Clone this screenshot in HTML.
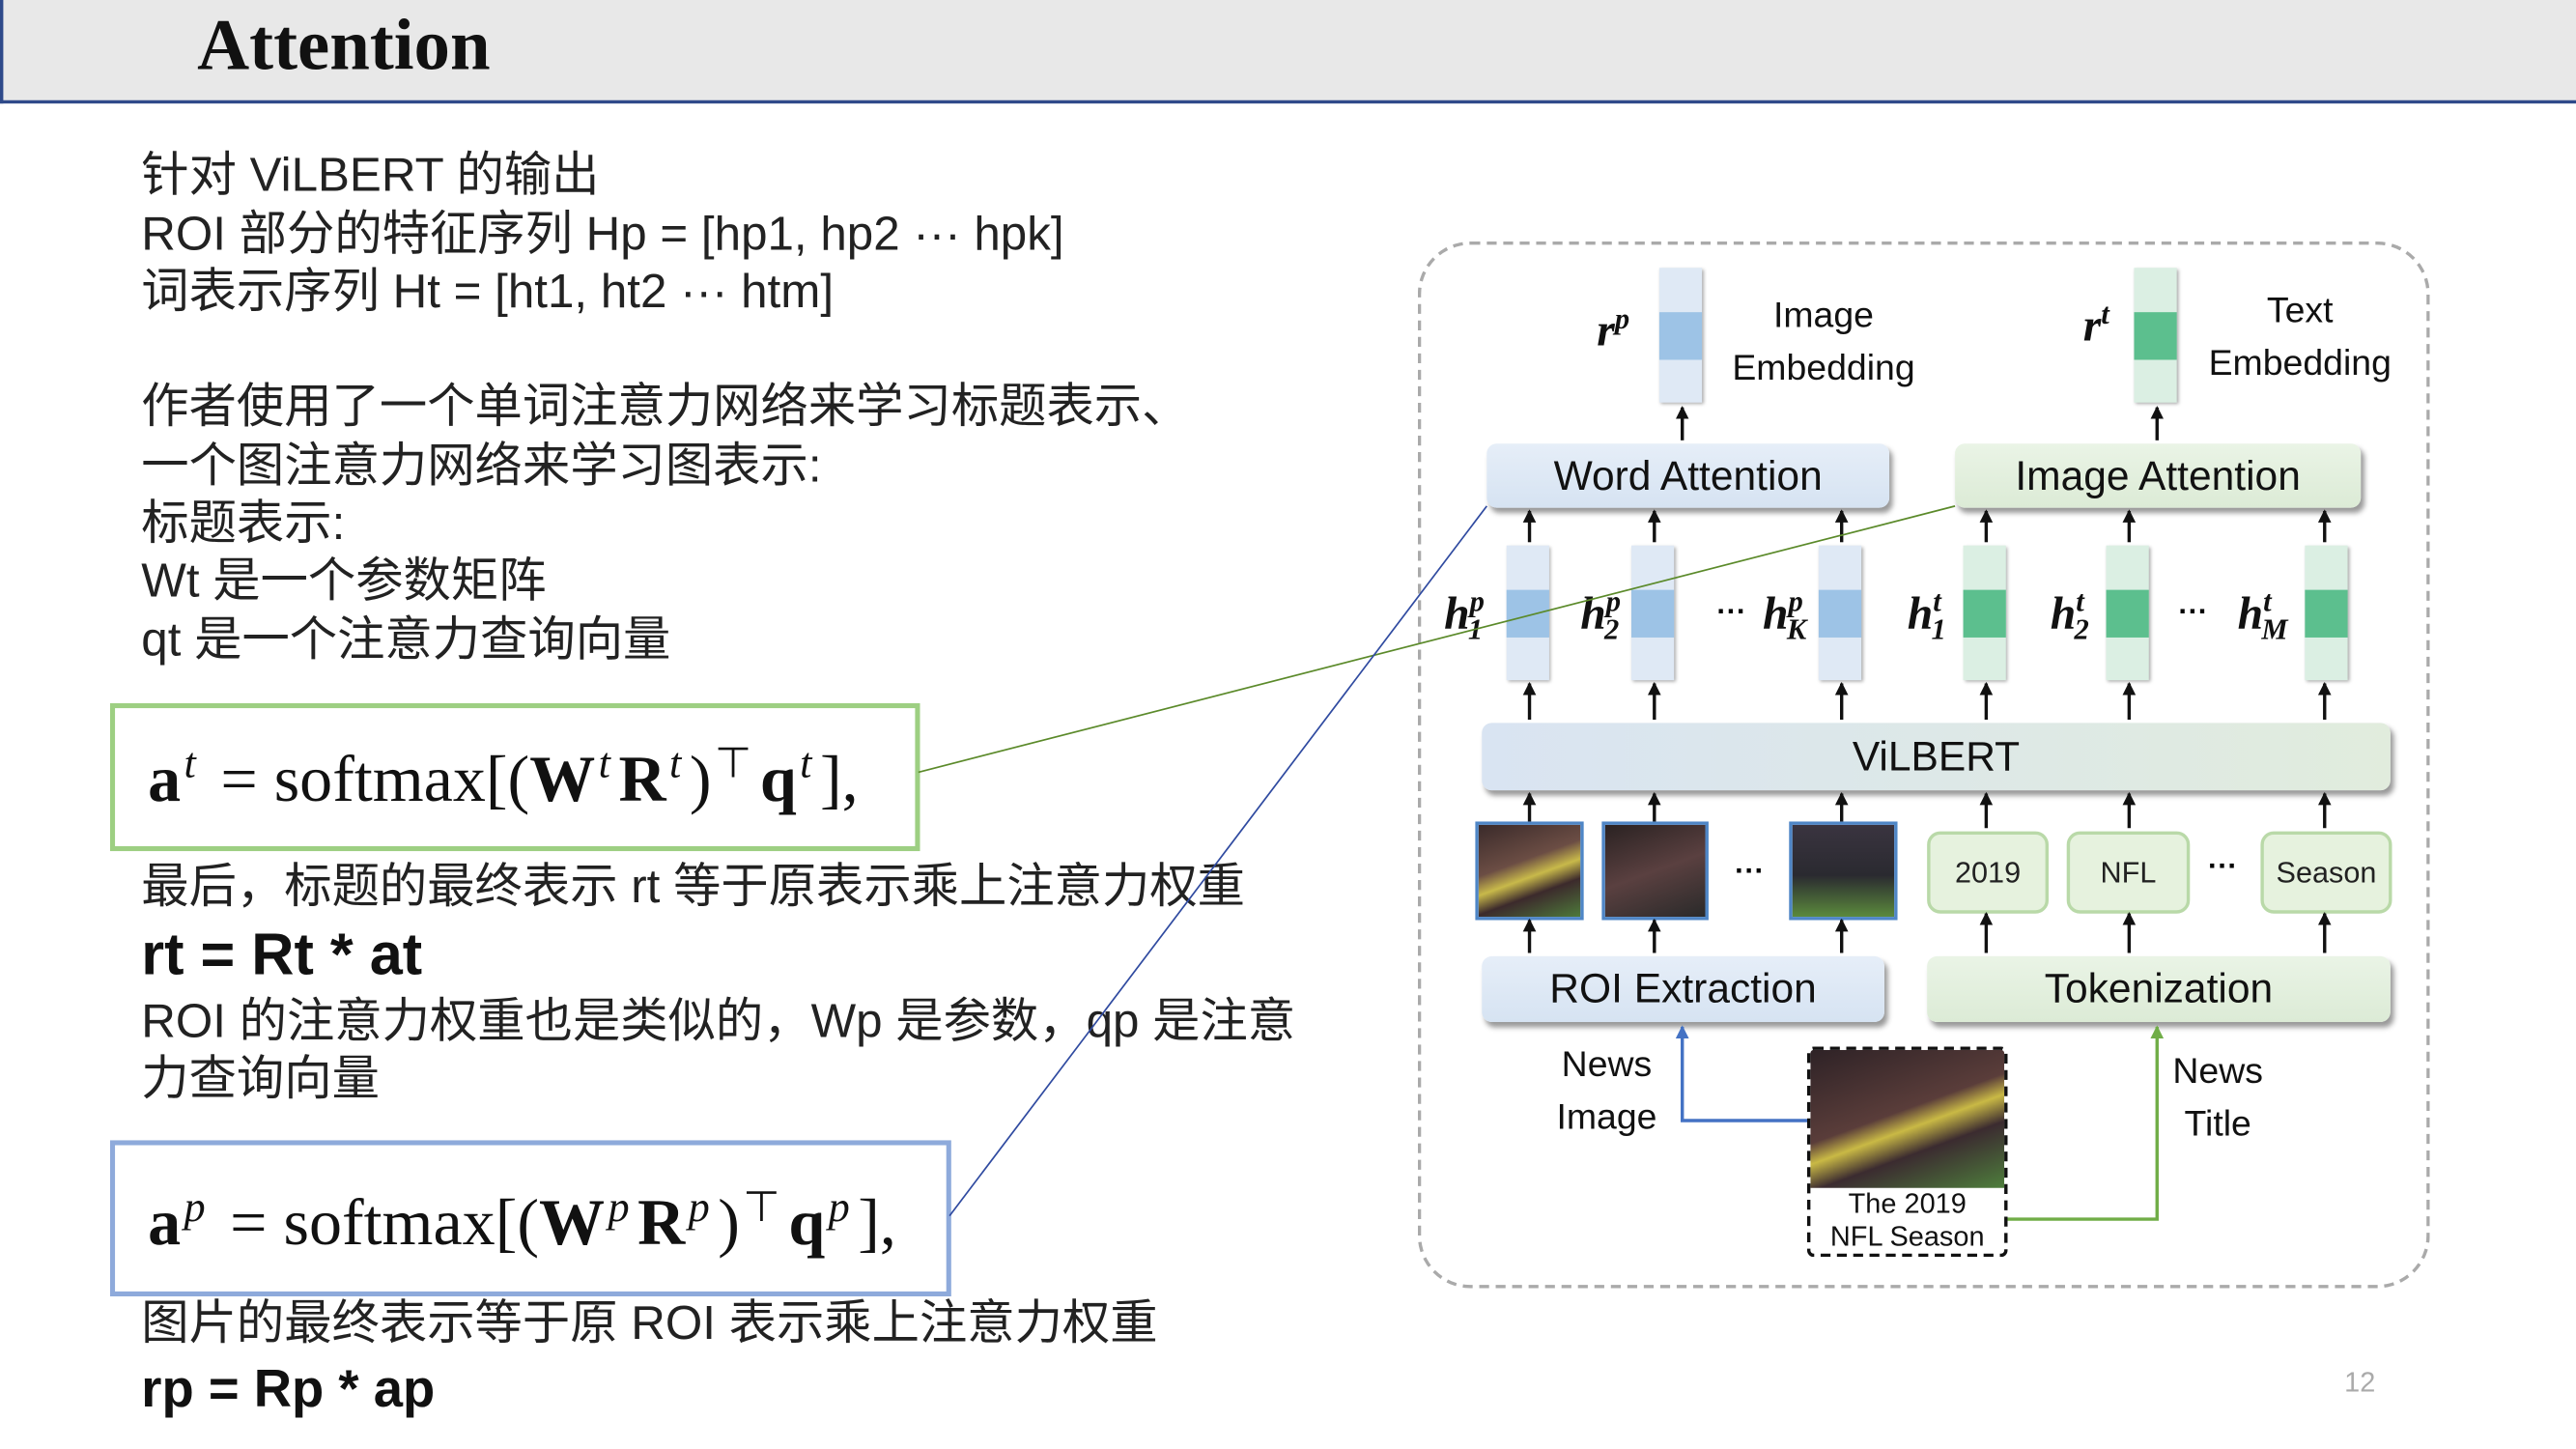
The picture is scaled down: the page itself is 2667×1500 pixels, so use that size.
<!DOCTYPE html>
<html><head><meta charset="utf-8"><style>
html,body{margin:0;padding:0;background:#fff;overflow:hidden}
#w{width:1568px;height:882px;position:relative;transform:scale(1.70089);transform-origin:0 0;font-family:"Liberation Sans","Noto Sans CJK SC",sans-serif}
.a{position:absolute}
.hdr{left:0;top:0;width:1566px;height:61px;background:#e8e8e8;border-left:2px solid #2f4a8a;border-bottom:2px solid #2f4a8a}
.title{left:120px;top:2px;font:bold 44px "Liberation Serif",serif;color:#111}
.t{left:86px;font-size:29px;color:#222;white-space:nowrap;line-height:36px}
.b{font-weight:bold;font-size:36px;color:#111}
.box{border:3px solid;background:#fff}
.f{font-family:"Liberation Serif",serif;font-size:40px;color:#111;white-space:nowrap}
.f sup{font-size:26px;padding:0 5px 0 2px}
.lb{background:linear-gradient(#e6eef8,#d6e3f2);border-radius:6px;box-shadow:2px 3px 3px #999;text-align:center;font-size:25px;color:#111}
.lg{background:linear-gradient(#eaf4e6,#dcebd6);border-radius:6px;box-shadow:2px 3px 3px #999;text-align:center;font-size:25px;color:#111}
.bb{background:#dfe9f5;width:26px;height:82px;box-shadow:1px 1px 2px #aaa}
.bb i{position:absolute;left:0;top:27px;width:26px;height:29px;background:#9dc3e6}
.gb{background:#dbefe3;width:26px;height:82px;box-shadow:1px 1px 2px #aaa}
.gb i{position:absolute;left:0;top:27px;width:26px;height:29px;background:#5cbf8e}
.hl{font:italic bold 28px "Liberation Serif",serif;color:#111}
.hl sup,.hl sub{font-size:18px}
.tok{background:#e6f2de;border:2px solid #b9d9a8;border-radius:8px;text-align:center;font-size:18px;line-height:46px;color:#222}
.img{background:linear-gradient(160deg,#3a2a2a,#6b4d44 40%,#c8b94a 55%,#3c2a2c 70%,#4d7a3a);border:2px solid #4f86c6}
.lab{font-size:22px;color:#111;text-align:center;line-height:32px}
</style></head><body><div id="w">
<div class="a hdr"></div>
<div class="a title">Attention</div>
<div class="a t" style="top:89px">针对 ViLBERT 的输出</div>
<div class="a t" style="top:125px">ROI 部分的特征序列 Hp = [hp1, hp2 ··· hpk]</div>
<div class="a t" style="top:160px">词表示序列 Ht = [ht1, ht2 ··· htm]</div>
<div class="a t" style="top:230px">作者使用了一个单词注意力网络来学习标题表示、</div>
<div class="a t" style="top:266px">一个图注意力网络来学习图表示:</div>
<div class="a t" style="top:301px">标题表示:</div>
<div class="a t" style="top:336px">Wt 是一个参数矩阵</div>
<div class="a t" style="top:372px">qt 是一个注意力查询向量</div>
<div class="a box" style="left:67px;top:428px;width:487px;height:84px;border-color:#9dcf82"></div>
<div class="a f" style="left:90px;top:450px"><b>a</b><sup><i>t</i></sup> = softmax[(<b>W</b><sup><i>t</i></sup><b>R</b><sup><i>t</i></sup>)<sup>⊤</sup><b>q</b><sup><i>t</i></sup>],</div>
<div class="a t" style="top:522px">最后，标题的最终表示 rt 等于原表示乘上注意力权重</div>
<div class="a t b" style="top:563px">rt = Rt * at</div>
<div class="a t" style="top:604px">ROI 的注意力权重也是类似的，Wp 是参数，qp 是注意</div>
<div class="a t" style="top:639px">力查询向量</div>
<div class="a box" style="left:67px;top:694px;width:506px;height:89px;border-color:#8eaadb"></div>
<div class="a f" style="left:90px;top:720px"><b>a</b><sup><i>p</i></sup> = softmax[(<b>W</b><sup><i>p</i></sup><b>R</b><sup><i>p</i></sup>)<sup>⊤</sup><b>q</b><sup><i>p</i></sup>],</div>
<div class="a t" style="top:788px">图片的最终表示等于原 ROI 表示乘上注意力权重</div>
<div class="a t b" style="top:827px;font-size:32px">rp = Rp * ap</div>
<div class="a" style="left:1427px;top:832px;font-size:17px;color:#aaa">12</div>

<div class="a" style="left:863px;top:147px;width:612px;height:633px;border:2px dashed #aaa;border-radius:32px"></div>
<div class="a bb" style="left:1010px;top:163px"><i></i></div>
<div class="a gb" style="left:1299px;top:163px"><i></i></div>
<div class="a hl" style="left:972px;top:184px">r<sup>p</sup></div>
<div class="a hl" style="left:1268px;top:181px">r<sup>t</sup></div>
<div class="a lab" style="left:1042px;top:176px;width:136px">Image<br>Embedding</div>
<div class="a lab" style="left:1332px;top:173px;width:136px">Text<br>Embedding</div>
<div class="a lb" style="left:905px;top:270px;width:245px;height:39px;line-height:40px">Word Attention</div>
<div class="a lg" style="left:1190px;top:270px;width:247px;height:39px;line-height:40px">Image Attention</div>
<div class="a bb" style="left:917px;top:332px"><i></i></div>
<div class="a bb" style="left:993px;top:332px"><i></i></div>
<div class="a bb" style="left:1107px;top:332px"><i></i></div>
<div class="a gb" style="left:1195px;top:332px"><i></i></div>
<div class="a gb" style="left:1282px;top:332px"><i></i></div>
<div class="a gb" style="left:1403px;top:332px"><i></i></div>
<div class="a hl" style="left:879px;top:356px">h<sup>p</sup><sub style="margin-left:-10px">1</sub></div>
<div class="a hl" style="left:962px;top:356px">h<sup>p</sup><sub style="margin-left:-10px">2</sub></div>
<div class="a hl" style="left:1073px;top:356px">h<sup>p</sup><sub style="margin-left:-10px">K</sub></div>
<div class="a hl" style="left:1161px;top:356px">h<sup>t</sup><sub style="margin-left:-6px">1</sub></div>
<div class="a hl" style="left:1248px;top:356px">h<sup>t</sup><sub style="margin-left:-6px">2</sub></div>
<div class="a hl" style="left:1362px;top:356px">h<sup>t</sup><sub style="margin-left:-6px">M</sub></div>
<div class="a" style="left:1045px;top:362px;font-weight:bold;font-size:18px">···</div>
<div class="a" style="left:1326px;top:362px;font-weight:bold;font-size:18px">···</div>
<div class="a" style="left:1056px;top:520px;font-weight:bold;font-size:18px">···</div>
<div class="a" style="left:1344px;top:517px;font-weight:bold;font-size:18px">···</div>
<div class="a lb" style="left:902px;top:440px;width:553px;height:41px;line-height:42px;background:linear-gradient(90deg,#d9e4f2,#e1ecdd)">ViLBERT</div>
<div class="a img" style="left:898px;top:500px;width:62px;height:56px"></div>
<div class="a img" style="left:975px;top:500px;width:61px;height:56px;background:linear-gradient(160deg,#2a2222,#5a4040 50%,#2a2a2a)"></div>
<div class="a img" style="left:1089px;top:500px;width:62px;height:56px;background:linear-gradient(180deg,#3a3440,#2a2a30 55%,#5b8a3c)"></div>
<div class="a tok" style="left:1173px;top:506px;width:70px;height:46px">2019</div>
<div class="a tok" style="left:1258px;top:506px;width:71px;height:46px">NFL</div>
<div class="a tok" style="left:1376px;top:506px;width:76px;height:46px">Season</div>
<div class="a lb" style="left:902px;top:582px;width:245px;height:40px;line-height:41px">ROI Extraction</div>
<div class="a lg" style="left:1173px;top:582px;width:282px;height:40px;line-height:41px">Tokenization</div>
<div class="a lab" style="left:928px;top:632px;width:100px">News<br>Image</div>
<div class="a lab" style="left:1300px;top:636px;width:100px">News<br>Title</div>
<div class="a" style="left:1100px;top:637px;width:118px;height:124px;border:2px dashed #111;border-radius:4px;background:#fff;overflow:hidden">
<div style="height:84px;background:linear-gradient(160deg,#2e2226,#5a3d3a 45%,#c9b945 55%,#3b2b30 68%,#4e7e3c)"></div>
<div style="font-size:17px;line-height:20px;text-align:center;color:#111">The 2019<br>NFL Season</div></div>
<svg class="a" style="left:0;top:0" width="1568" height="882">
<defs><marker id="m" markerWidth="8" markerHeight="8" refX="7" refY="4" orient="auto" markerUnits="userSpaceOnUse"><path d="M0,0 L8,4 L0,8z" fill="#111"/></marker>
<marker id="mb" markerWidth="8" markerHeight="8" refX="7" refY="4" orient="auto" markerUnits="userSpaceOnUse"><path d="M0,0 L8,4 L0,8z" fill="#4472c4"/></marker>
<marker id="mg" markerWidth="8" markerHeight="8" refX="7" refY="4" orient="auto" markerUnits="userSpaceOnUse"><path d="M0,0 L8,4 L0,8z" fill="#70ad47"/></marker></defs>
<g stroke="#111" stroke-width="2" marker-end="url(#m)">
<line x1="1024" y1="268" x2="1024" y2="248"/><line x1="1313" y1="268" x2="1313" y2="248"/>
<line x1="931" y1="330" x2="931" y2="311"/><line x1="1007" y1="330" x2="1007" y2="311"/><line x1="1121" y1="330" x2="1121" y2="311"/><line x1="1209" y1="330" x2="1209" y2="311"/><line x1="1296" y1="330" x2="1296" y2="311"/><line x1="1415" y1="330" x2="1415" y2="311"/>
<line x1="931" y1="438" x2="931" y2="416"/><line x1="1007" y1="438" x2="1007" y2="416"/><line x1="1121" y1="438" x2="1121" y2="416"/><line x1="1209" y1="438" x2="1209" y2="416"/><line x1="1296" y1="438" x2="1296" y2="416"/><line x1="1415" y1="438" x2="1415" y2="416"/>
<line x1="931" y1="500" x2="931" y2="483"/><line x1="1007" y1="500" x2="1007" y2="483"/><line x1="1121" y1="500" x2="1121" y2="483"/><line x1="1209" y1="504" x2="1209" y2="483"/><line x1="1296" y1="504" x2="1296" y2="483"/><line x1="1415" y1="504" x2="1415" y2="483"/>
<line x1="931" y1="580" x2="931" y2="560"/><line x1="1007" y1="580" x2="1007" y2="560"/><line x1="1121" y1="580" x2="1121" y2="560"/><line x1="1209" y1="580" x2="1209" y2="556"/><line x1="1296" y1="580" x2="1296" y2="556"/><line x1="1415" y1="580" x2="1415" y2="556"/>
</g>
<path d="M1100 682H1024V625" stroke="#4472c4" stroke-width="2" fill="none" marker-end="url(#mb)"/>
<path d="M1222 742H1313V625" stroke="#70ad47" stroke-width="2" fill="none" marker-end="url(#mg)"/>
<line x1="559" y1="470" x2="1190" y2="308" stroke="#5b8a2a" stroke-width="1"/>
<line x1="578" y1="740" x2="905" y2="308" stroke="#2f4aa0" stroke-width="1"/>
</svg>
</div></body></html>
